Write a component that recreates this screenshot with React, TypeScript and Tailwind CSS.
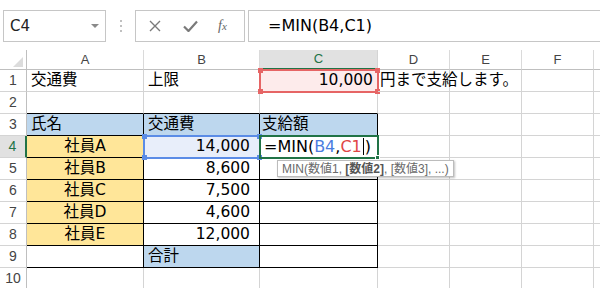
import React from "react";

const GRID = "border-[#d4d4d4]";
const cellFont = "font-['DejaVu_Sans','Noto_Sans_CJK_JP',sans-serif]";

type CellProps = {
  w: number;
  children?: React.ReactNode;
  cls?: string;
};

function Cell({ w, children, cls = "" }: CellProps) {
  return (
    <div
      style={{ width: w }}
      className={`h-full shrink-0 border-r border-b flex items-center overflow-visible whitespace-nowrap ${cls}`}
    >
      {children}
    </div>
  );
}

function RowHead({ n, sel }: { n: number; sel?: boolean }) {
  return (
    <div
      className={`w-[27px] h-full shrink-0 border-b border-[#d4d4d4] flex items-center justify-center font-['Liberation_Sans',sans-serif] text-[14px] ${
        sel
          ? "bg-[#e1e1e1] text-[#217346] border-r-2 border-r-[#217346]"
          : "text-[#444] border-r border-r-[#bfbfbf]"
      }`}
    >
      {n}
    </div>
  );
}

const W = { A: 117, B: 116, C: 118, D: 72, E: 72, F: 72, G: 40 };

function Row({ children }: { children: React.ReactNode }) {
  return <div className="flex h-[22px]">{children}</div>;
}

export default function App() {
  const B = "border-black";
  const blue = "bg-[#bdd7ee]";
  const yellow = "bg-[#ffe699]";
  const people = ["社員A", "社員B", "社員C", "社員D", "社員E"];
  const vals = ["14,000", "8,600", "7,500", "4,600", "12,000"];

  return (
    <div className={`w-[600px] h-[288px] overflow-hidden bg-white relative text-black ${cellFont}`}>
      {/* Formula bar */}
      <div className="flex items-stretch h-[32px] mt-[10px]">
        <div className="ml-[3px] w-[103px] border border-[#c6c6c6] flex items-center justify-between pl-[6px] pr-[6px]">
          <span className="text-[15px] text-[#222]">C4</span>
          <svg width="8" height="5" viewBox="0 0 8 5">
            <path d="M0 0 L8 0 L4 4 Z" fill="#8a8a8a" />
          </svg>
        </div>
        <div className="w-[29px] flex flex-col items-center justify-center gap-[3px]">
          <span className="w-[2px] h-[2px] bg-[#c0c0c0]" />
          <span className="w-[2px] h-[2px] bg-[#c0c0c0]" />
          <span className="w-[2px] h-[2px] bg-[#c0c0c0]" />
        </div>
        <div className="w-[110px] border border-[#c6c6c6] flex items-center pl-[13px]">
          <svg width="12" height="12" viewBox="0 0 12 12" className="mr-[22px]">
            <path d="M1 1 L11 11 M11 1 L1 11" stroke="#7a7a7a" strokeWidth="1.4" />
          </svg>
          <svg width="15" height="12" viewBox="0 0 15 12" className="mr-[20px]">
            <path d="M1 6.5 L5.5 11 L14 1.5" stroke="#7a7a7a" strokeWidth="2.2" fill="none" />
          </svg>
          <span className="font-['Liberation_Serif',serif] italic text-[14px] text-[#666] leading-none">
            f<span className="text-[11px]">x</span>
          </span>
        </div>
        <div className="ml-[3px] flex-1 border-y border-l border-[#c6c6c6] flex items-center pl-[19px]">
          <span className="text-[16px] text-black">=MIN(B4,C1)</span>
        </div>
      </div>

      {/* Sheet */}
      <div className="relative mt-[8px]">
        {/* Column headers */}
        <div className="flex h-[20px] font-['Liberation_Sans',sans-serif] text-[13px] text-[#444]">
          <div className="w-[27px] shrink-0 border-r border-b border-[#bfbfbf] relative">
            <svg width="10" height="10" viewBox="0 0 10 10" className="absolute right-[3px] bottom-[2px]">
              <path d="M10 0 L10 10 L0 10 Z" fill="#dcdcdc" />
            </svg>
          </div>
          {(["A", "B", "C", "D", "E", "F", "G"] as const).map((c) => (
            <div
              key={c}
              style={{ width: W[c] }}
              className={`shrink-0 flex items-center justify-center ${
                c === "C"
                  ? "bg-[#e1e1e1] text-[#217346] border-b-2 border-b-[#217346] border-r border-r-[#d4d4d4]"
                  : "border-r border-r-[#dadada] border-b border-b-[#bfbfbf]"
              }`}
            >
              {c === "G" ? "" : c}
            </div>
          ))}
        </div>

        {/* Row 1 */}
        <Row>
          <RowHead n={1} />
          <Cell w={W.A} cls={`${GRID} pl-[4px] text-[15.5px]`}>交通費</Cell>
          <Cell w={W.B} cls={`${GRID} pl-[4px] text-[15.5px]`}>上限</Cell>
          <Cell w={W.C} cls={`${GRID} justify-end pr-[4px] text-[15.5px] bg-[#fdebeb]`}>10,000</Cell>
          <Cell w={W.D} cls={`${GRID} pl-[2px] text-[15.5px] relative z-10`}>
            <span>円まで支給します。</span>
          </Cell>
          <Cell w={W.E} cls={`${GRID} border-r-[#d4d4d4]`} />
          <Cell w={W.F} cls={GRID} />
          <Cell w={W.G} cls={GRID} />
        </Row>

        {/* Row 2 */}
        <Row>
          <RowHead n={2} />
          <Cell w={W.A} cls={`border-r-[#d4d4d4] ${B}`} />
          <Cell w={W.B} cls={`border-r-[#d4d4d4] ${B}`} />
          <Cell w={W.C} cls={`border-r-[#d4d4d4] ${B}`} />
          <Cell w={W.D} cls={GRID} />
          <Cell w={W.E} cls={GRID} />
          <Cell w={W.F} cls={GRID} />
          <Cell w={W.G} cls={GRID} />
        </Row>

        {/* Row 3 */}
        <Row>
          <RowHead n={3} />
          <Cell w={W.A} cls={`${B} ${blue} pl-[4px] text-[15.5px]`}>氏名</Cell>
          <Cell w={W.B} cls={`${B} ${blue} pl-[4px] text-[15.5px]`}>交通費</Cell>
          <Cell w={W.C} cls={`${B} ${blue} pl-[2px] text-[15.5px]`}>支給額</Cell>
          <Cell w={W.D} cls={GRID} />
          <Cell w={W.E} cls={GRID} />
          <Cell w={W.F} cls={GRID} />
          <Cell w={W.G} cls={GRID} />
        </Row>

        {/* Rows 4-8 */}
        {people.map((p, i) => (
          <Row key={p}>
            <RowHead n={4 + i} sel={i === 0} />
            <Cell w={W.A} cls={`${B} ${yellow} justify-center text-[15.5px]`}>{p}</Cell>
            <Cell
              w={W.B}
              cls={`${B} justify-end pr-[9px] text-[15.5px] ${i === 0 ? "bg-[#e8eefa]" : ""}`}
            >
              {vals[i]}
            </Cell>
            <Cell w={W.C} cls={`${B} pl-[4px] text-[16px]`}>
              {i === 0 ? (
                <span className="flex items-center">
                  =MIN(<span className="text-[#4a7de0]">B4</span>,
                  <span className="text-[#e04646]">C1</span>
                  <span className="w-[1px] h-[17px] bg-black mx-[1px]" />)
                </span>
              ) : null}
            </Cell>
            <Cell w={W.D} cls={GRID} />
            <Cell w={W.E} cls={GRID} />
            <Cell w={W.F} cls={GRID} />
            <Cell w={W.G} cls={GRID} />
          </Row>
        ))}

        {/* Row 9 */}
        <Row>
          <RowHead n={9} />
          <Cell w={W.A} cls={B} />
          <Cell w={W.B} cls={`${B} ${blue} pl-[4px] text-[15.5px]`}>合計</Cell>
          <Cell w={W.C} cls={B} />
          <Cell w={W.D} cls={GRID} />
          <Cell w={W.E} cls={GRID} />
          <Cell w={W.F} cls={GRID} />
          <Cell w={W.G} cls={GRID} />
        </Row>

        {/* Row 10 */}
        <Row>
          <RowHead n={10} />
          <Cell w={W.A} cls={GRID} />
          <Cell w={W.B} cls={GRID} />
          <Cell w={W.C} cls={GRID} />
          <Cell w={W.D} cls={GRID} />
          <Cell w={W.E} cls={GRID} />
          <Cell w={W.F} cls={GRID} />
          <Cell w={W.G} cls={GRID} />
        </Row>

        {/* C1 red reference range */}
        <div className="absolute left-[259px] top-[19px] w-[120px] h-[24px] border-2 border-[#e66565] pointer-events-none">
          <span className="absolute -left-[3px] -top-[3px] w-[5px] h-[5px] bg-[#e66565]" />
          <span className="absolute -right-[3px] -top-[3px] w-[5px] h-[5px] bg-[#e66565]" />
          <span className="absolute -left-[3px] -bottom-[3px] w-[5px] h-[5px] bg-[#e66565]" />
          <span className="absolute -right-[3px] -bottom-[3px] w-[5px] h-[5px] bg-[#e66565]" />
        </div>

        {/* B4 blue reference range */}
        <div className="absolute left-[143px] top-[85px] w-[118px] h-[24px] border-2 border-[#5b8ce6] pointer-events-none">
          <span className="absolute -left-[3px] -top-[3px] w-[5px] h-[5px] bg-[#5b8ce6]" />
          <span className="absolute -right-[3px] -top-[3px] w-[5px] h-[5px] bg-[#5b8ce6]" />
          <span className="absolute -left-[3px] -bottom-[3px] w-[5px] h-[5px] bg-[#5b8ce6]" />
          <span className="absolute -right-[3px] -bottom-[3px] w-[5px] h-[5px] bg-[#5b8ce6]" />
        </div>

        {/* C4 active cell */}
        <div className="absolute left-[259px] top-[85px] w-[120px] h-[24px] border-2 border-[#217346] pointer-events-none">
          <span className="absolute -right-[3px] -bottom-[3px] w-[5px] h-[5px] bg-[#217346] border border-white" />
        </div>

        {/* Tooltip */}
        <div className="absolute left-[277px] top-[110px] h-[17px] px-[4px] bg-white border border-[#bcbcbc] shadow-[1px_1px_2px_rgba(0,0,0,0.25)] flex items-center whitespace-pre font-['Liberation_Sans','Noto_Sans_CJK_JP',sans-serif] text-[12px] leading-none text-[#6a6a6a]">
          {"MIN(数値1, "}
          <span className="font-bold text-[#555]">[数値2]</span>
          {", [数値3], ...)"}
        </div>
      </div>
    </div>
  );
}
